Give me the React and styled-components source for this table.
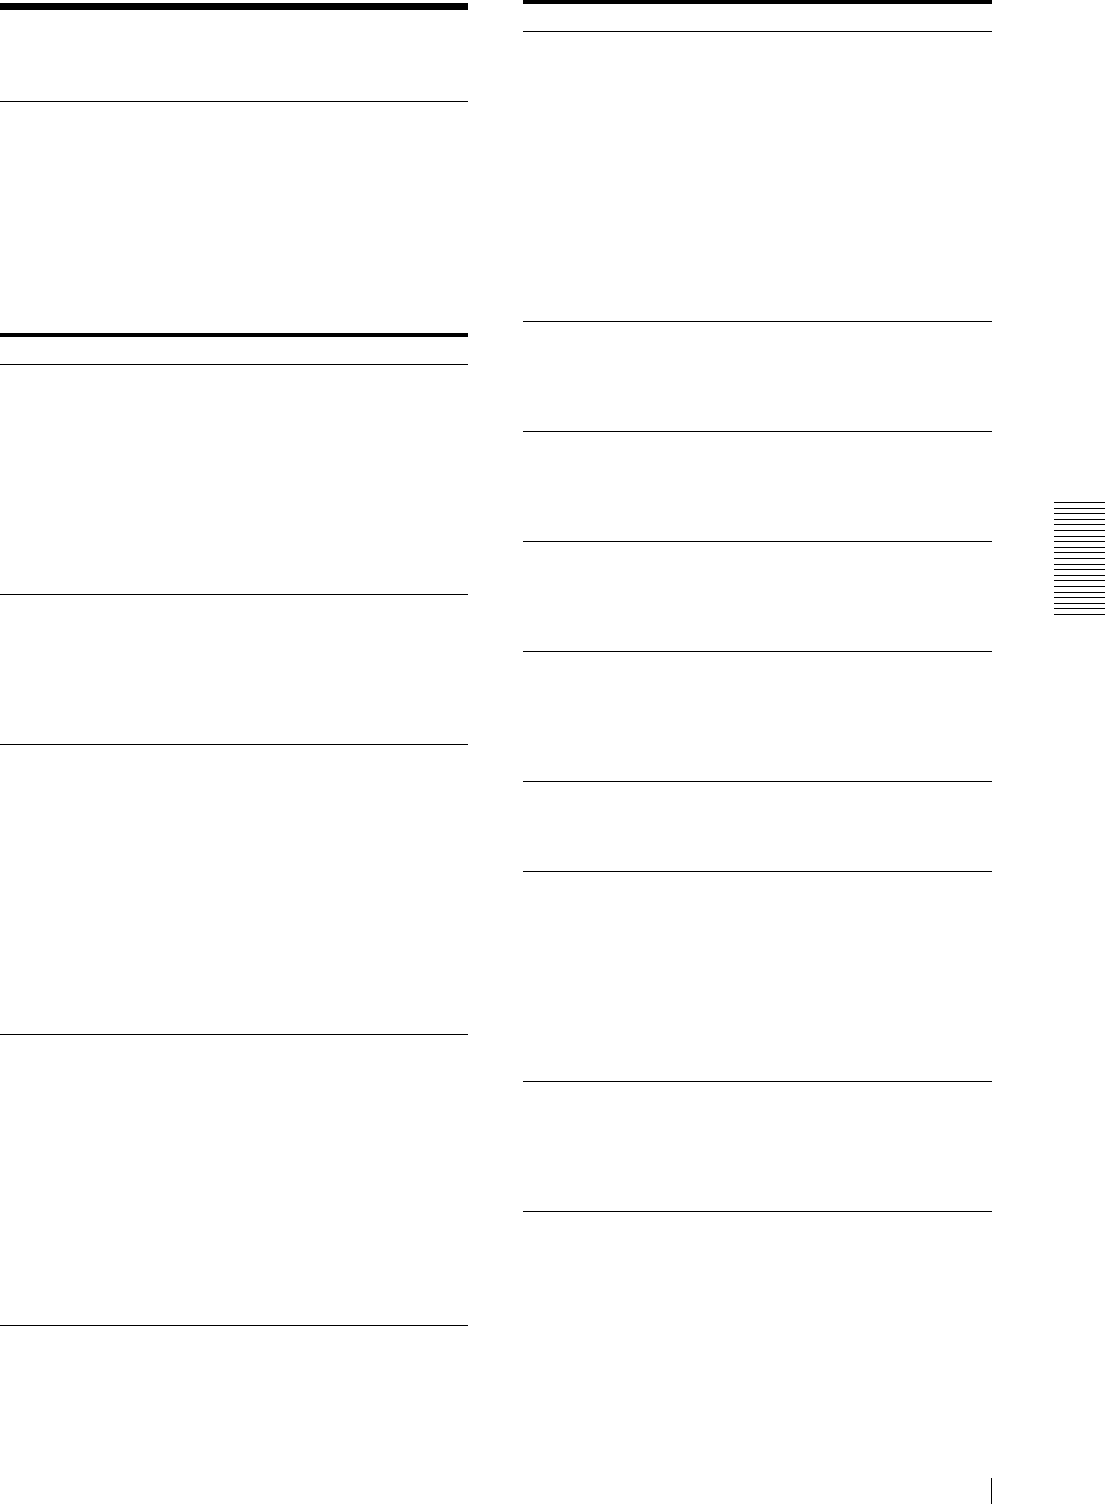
import React from 'react';
import styled, { createGlobalStyle } from 'styled-components';

const GlobalStyle = createGlobalStyle`
  html, body {
    margin: 0;
    padding: 0;
    background: #fff;
    font-family: "Liberation Serif", "Times New Roman", serif;
    color: #000;
  }
  * { box-sizing: border-box; }
`;

const Page = styled.div`
  width: 1105px;
  height: 1504px;
  display: grid;
  grid-template-columns: 468px 469px 1fr;
  grid-template-rows: 1fr 26px;
  column-gap: 55px;
  overflow: hidden;
`;

const Column = styled.div`
  display: flex;
  flex-direction: column;
  padding-top: ${p => p.$offset || 0}px;
`;

const Section = styled.section`
  height: ${p => p.$h}px;
  flex-shrink: 0;
  border-top: ${p => p.$rule || 1}px solid #000;
`;

const Thumb = styled.div`
  justify-self: end;
  width: 51px;
  padding-top: 502px;
  display: flex;
  flex-direction: column;
  gap: 4.6px;
`;

const Stripe = styled.span`
  display: block;
  height: 1px;
  background: #000;
`;

const Folio = styled.div`
  grid-column: 2;
  justify-self: end;
  width: 1px;
  height: 100%;
  border-right: 1px solid #000;
`;

const left = [
  { h: 98, rule: 7 },
  { h: 232 },
  { h: 31, rule: 4 },
  { h: 230 },
  { h: 150 },
  { h: 290 },
  { h: 291 },
  { h: 150 },
];

const right = [
  { h: 31, rule: 4 },
  { h: 290 },
  { h: 110 },
  { h: 110 },
  { h: 110 },
  { h: 130 },
  { h: 90 },
  { h: 210 },
  { h: 130 },
  { h: 150 },
];

export default function App() {
  return (
    <>
      <GlobalStyle />
      <Page>
        <Column $offset={3}>
          {left.map((s, i) => (
            <Section key={i} $h={s.h} $rule={s.rule} />
          ))}
        </Column>
        <Column>
          {right.map((s, i) => (
            <Section key={i} $h={s.h} $rule={s.rule} />
          ))}
        </Column>
        <Thumb>
          {Array.from({ length: 21 }, (_, i) => (
            <Stripe key={i} />
          ))}
        </Thumb>
        <Folio />
      </Page>
    </>
  );
}
